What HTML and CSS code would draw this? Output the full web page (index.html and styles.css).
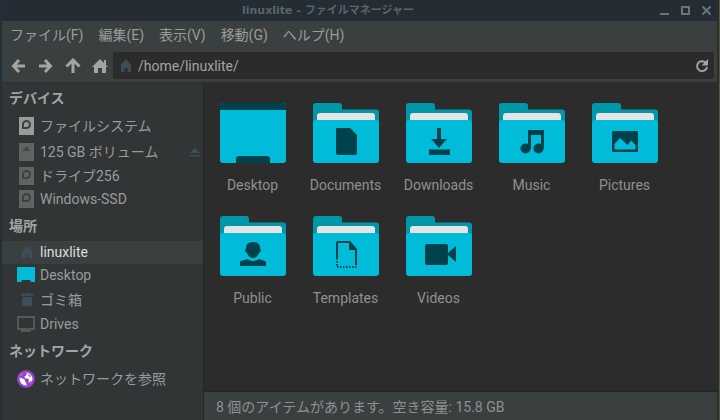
FILE: index.html
```html
<!DOCTYPE html>
<html lang="ja">
<head>
  <meta charset="UTF-8" />
  <meta name="viewport" content="width=device-width, initial-scale=1.0" />
  <title>linuxlite - ファイルマネージャー</title>
  <link rel="stylesheet" href="styles.css">
</head>
<body>
  <!-- shared shapes -->
  <svg class="defs" width="0" height="0" aria-hidden="true">
    <symbol id="folder" viewBox="0 0 66 60">
      <path fill="#0097a9" d="M0 3q0-3 3-3h23q3 0 3 3v3.500h34q3 0 3 3V30H0z" />
      <path fill="#e4e4e4" d="M4 13q0-3 3-3h52q3 0 3 3v10H4z" />
      <path fill="#00bcd8" d="M0 20q0-3 3-3h60q3 0 3 3v37q0 3-3 3H3q-3 0-3-3z" />
    </symbol>
    <symbol id="house" viewBox="0 0 16 16">
      <path d="M8 1L0 9h2v6h4v-5h4v5h4V9h2l-2-2V2h-2v3z" />
    </symbol>
    <symbol id="disk" viewBox="0 0 15 18">
      <path d="M0 0h15v18H0z" />
      <path class="mark" fill="none" stroke-width="2" d="M4 11V7.500A3.500 3.500 0 1 1 7.500 11z" />
    </symbol>
  </svg>

  <div class="window">
    <header class="titlebar">
      <h1 class="title">linuxlite - ファイルマネージャー</h1>
      <button class="win-btn" aria-label="最小化"><svg width="11" height="11"><path d="M1 9h9" /></svg></button>
      <button class="win-btn" aria-label="最大化"><svg width="11" height="11"><path d="M2 2h7v7H2z" /></svg></button>
      <button class="win-btn" aria-label="閉じる"><svg width="11" height="11"><path d="M1.500 1.500l8 8M9.500 1.500l-8 8" /></svg></button>
    </header>

    <nav class="menubar">
      <button>ファイル(F)</button>
      <button>編集(E)</button>
      <button>表示(V)</button>
      <button>移動(G)</button>
      <button>ヘルプ(H)</button>
    </nav>

    <div class="toolbar">
      <button class="tool" aria-label="戻る"><svg width="16" height="16"><path d="M14 8H3M8 2L2.500 8L8 14" /></svg></button>
      <button class="tool" aria-label="進む"><svg width="16" height="16"><path d="M1 8h11M7 2l5.500 6L7 14" /></svg></button>
      <button class="tool" aria-label="上へ"><svg width="16" height="16"><path d="M8 15V3M1.500 8.500L8 2l6.500 6.500" /></svg></button>
      <button class="tool home" aria-label="ホーム"><svg width="16" height="16"><use href="#house" /></svg></button>
      <div class="location">
        <svg class="location-icon" width="12" height="13"><path d="M6 0L0 7h1v6h3.500V9h3v4H11V7h1z" /></svg>
        <input type="text" value="/home/linuxlite/" aria-label="場所" />
        <button class="reload" aria-label="再読み込み">
          <svg width="14" height="14"><path class="arc" d="M10.500 3.500A5 5 0 1 0 12 8" /><path class="head" d="M13 0v6.500H6.500z" /></svg>
        </button>
      </div>
    </div>

    <div class="content">
      <aside class="sidebar">
        <h2>デバイス</h2>
        <a href="#" class="place tall"><svg class="disk bright" width="15" height="18"><use href="#disk" /></svg>ファイルシステム</a>
        <div class="volume">
          <a href="#" class="place tall"><svg class="disk" width="15" height="18"><path d="M0 0h15v18H0z" /><path class="eject-mark" d="M7.500 3l4 5h-8z" /></svg>125 GB ボリューム</a>
          <button class="eject" aria-label="取り出す"><svg width="10" height="9"><path d="M5 0l5 5H0zM0 7h10v1.500H0z" /></svg></button>
        </div>
        <a href="#" class="place"><svg class="disk" width="15" height="18"><use href="#disk" /></svg>ドライブ256</a>
        <a href="#" class="place"><svg class="disk" width="15" height="18"><use href="#disk" /></svg>Windows-SSD</a>

        <h2>場所</h2>
        <a href="#" class="place selected"><svg class="slate" width="12" height="12"><path d="M6 0L0 6.500h1V12h3.500V8.500h3V12H11V6.500h1z" /></svg>linuxlite</a>
        <a href="#" class="place"><svg width="18" height="15"><path fill="#00bcd8" d="M0 0h18v15h-4l-1-2H5l-1 2H0z" /></svg>Desktop</a>
        <a href="#" class="place tall"><svg class="slate" width="12" height="14"><path d="M0 1h4V0h4v1h4v2H0zM1 4h10v8q0 1-1 1H2q-1 0-1-1z" /></svg>ゴミ箱</a>
        <a href="#" class="place"><svg class="screen" width="18" height="16"><path d="M1 1h16v12H1zM4 15h10" /></svg>Drives</a>

        <h2>ネットワーク</h2>
        <a href="#" class="place tall">
          <svg width="18" height="18">
            <circle cx="9" cy="9" r="9" fill="#9440c4" />
            <circle cx="9" cy="9" r="6.500" fill="#fff" />
            <path fill="#9440c4" d="M7 2.500l3 0-.500 2.500-2 1.500.500 2h3l1 2-1 2 2-.500 1-2 .500 2-2 3-3 .500V13l-1.500-1.500V10L4 7.500 3 9l-.500-2zM11 4l2 1 1 2-2-.500z" />
          </svg>ネットワークを参照
        </a>
      </aside>

      <div class="pane">
        <main class="files">
          <a href="#" class="file">
            <svg viewBox="0 0 66 60">
              <rect width="66" height="60" rx="3" fill="#00bcd8" />
              <path fill="#00424c" d="M0 7V3q0-3 3-3h60q3 0 3 3v4zM16 60v-4q0-3 3-3h28q3 0 3 3v4z" />
            </svg>
            <span>Desktop</span>
          </a>
          <a href="#" class="file">
            <svg viewBox="0 0 66 60"><use href="#folder" />
              <path d="M23 26q0-1 1-1h13l7 7v18q0 2-2 2H25q-2 0-2-2z" />
            </svg>
            <span>Documents</span>
          </a>
          <a href="#" class="file">
            <svg viewBox="0 0 66 60"><use href="#folder" />
              <path d="M31 25h4v11h6l-8 9-8-9h6zM23 46.500h21V52H23z" />
            </svg>
            <span>Downloads</span>
          </a>
          <a href="#" class="file">
            <svg viewBox="0 0 66 60"><use href="#folder" />
              <path d="M29 27h16v19h-3V32H32v14h-3z" />
              <circle cx="26.500" cy="45.500" r="5" /><circle cx="39.500" cy="45.500" r="5" />
            </svg>
            <span>Music</span>
          </a>
          <a href="#" class="file">
            <svg viewBox="0 0 66 60"><use href="#folder" />
              <path fill-rule="evenodd" d="M21 28h24q1 0 1 1v19q0 1-1 1H21q-1 0-1-1V29q0-1 1-1zM22.500 46.500h21V42L39 37.500l-3.500 4.500L28 35l-5.500 6z" />
            </svg>
            <span>Pictures</span>
          </a>
          <a href="#" class="file">
            <svg viewBox="0 0 66 60"><use href="#folder" />
              <path d="M33 26q7 0 7 6l1 3-2 2q-2 5-6 5t-6-5l-2-2 1-3q0-6 7-6zM20 50v-4q0-1 1-1l6-2q6 4 12 0l6 2q1 0 1 1v4z" />
            </svg>
            <span>Public</span>
          </a>
          <a href="#" class="file">
            <svg viewBox="0 0 66 60"><use href="#folder" />
              <path d="M23 42V27q0-2 2-2h12l7 8v16h-2V34h-6v-7H25v15z" />
              <path class="dots" d="M24 42v9h20" />
            </svg>
            <span>Templates</span>
          </a>
          <a href="#" class="file">
            <svg viewBox="0 0 66 60"><use href="#folder" />
              <path d="M21 28h19q2 0 2 2v7l8-7v16l-8-7v8q0 2-2 2H21q-2 0-2-2V30q0-2 2-2z" />
            </svg>
            <span>Videos</span>
          </a>
        </main>
        <footer class="statusbar">8 個のアイテムがあります。空き容量: 15.8 GB</footer>
      </div>
    </div>
  </div>
</body>
</html>
```

FILE: styles.css
```css
* {
  box-sizing: border-box;
}

body {
  margin: 0;
  background-color: #232d33;
  color: #9a9b9b;
  font-family: Roboto, "Noto Sans CJK JP", sans-serif;
  font-size: 14px;
  line-height: 20px;
  border-right: 1px solid #6b5326;
}

svg {
  display: block;
}

.defs {
  position: absolute;
}

button {
  padding: 0;
  border: none;
  background: none;
  color: inherit;
  font: inherit;
}

a {
  color: inherit;
  text-decoration: none;
}

.window {
  display: flex;
  flex-direction: column;
  min-height: 100vh;
  border: solid #22303a;
  border-width: 0 2px;
}

/* title bar */
.titlebar {
  display: flex;
  align-items: center;
  height: 21px;
}

.title {
  flex: 1;
  margin: 0;
  color: #5a656b;
  font-family: "DejaVu Sans", "Noto Sans CJK JP", sans-serif;
  font-size: 11px;
  line-height: 20px;
  text-align: center;
}

.win-btn {
  display: grid;
  place-items: center;
  width: 21px;
  height: 21px;
}

.win-btn svg {
  fill: none;
  stroke: #6b7479;
  stroke-width: 2;
}

/* menu and toolbar */
.menubar {
  display: flex;
  gap: 15px;
  padding: 4px 8px 7px;
  height: 31px;
  background-color: #3a403f;
}

.toolbar {
  display: flex;
  padding: 0 3px 3px;
  background-color: #3a403f;
  border-bottom: 1px solid #2a2e2e;
}

.tool {
  display: grid;
  place-items: center;
  width: 27px;
  height: 27px;
}

.tool svg {
  fill: none;
  stroke: #a3a4a4;
  stroke-width: 3;
}

.home svg {
  fill: #a3a4a4;
  stroke: none;
}

.location {
  flex: 1;
  display: flex;
  align-items: center;
  gap: 6px;
  height: 27px;
  padding: 0 5px 0 7px;
  border-radius: 2px;
  background-color: #2b2b2b;
}

.location-icon {
  fill: #3d4e59;
}

.location input {
  flex: 1;
  min-width: 0;
  padding: 0;
  border: none;
  outline: none;
  background: none;
  color: #a3a4a4;
  font: inherit;
}

.arc {
  fill: none;
  stroke: #a3a4a4;
  stroke-width: 2;
}

.head {
  fill: #a3a4a4;
}

/* sidebar */
.content {
  flex: 1;
  display: flex;
}

.sidebar {
  width: 202px;
  background-color: #313536;
  border-right: 1px solid #272929;
}

.sidebar h2 {
  margin: 0;
  padding: 0 7px;
  font-size: 14px;
  line-height: 30px;
  color: #a3a4a4;
}

.place {
  flex: 1;
  display: flex;
  align-items: center;
  height: 23px;
  padding: 0 0 2px 15px;
}

.place.tall {
  height: 26px;
  padding-bottom: 0;
}

/* icons share one centre line */
.place svg {
  width: 18px;
  margin-right: 5px;
  overflow: visible;
}

.place .disk {
  width: 15px;
  margin-left: 2px;
  margin-right: 6px;
}

.place .slate {
  width: 12px;
  margin-left: 4px;
  margin-right: 7px;
}

.place.selected {
  background-color: #3a403f;
  color: #dcdddd;
}

.disk {
  fill: #616262;
  stroke: none;
}

.disk.bright {
  fill: #999a9a;
}

.mark {
  stroke: #3f4242;
}

.eject-mark {
  fill: #454747;
}

.slate {
  fill: #3d4e59;
}

.screen {
  fill: none;
  stroke: #646565;
  stroke-width: 1.5;
}

.volume {
  display: flex;
  align-items: center;
}

.eject {
  margin-right: 3px;
}

.eject svg {
  fill: #3f4f56;
}

/* files */
.pane {
  flex: 1;
  display: flex;
  flex-direction: column;
  min-width: 0;
  background-color: #2c2c2c;
}

.files {
  flex: 1;
  display: grid;
  grid-template-columns: repeat(auto-fill, 93px);
  grid-auto-rows: 113px;
  padding: 20px 2px 0;
}

.file {
  display: flex;
  flex-direction: column;
  align-items: center;
  gap: 12px;
  color: #8f9090;
}

.file svg {
  width: 66px;
  height: 60px;
  fill: #00424c;
}

.dots {
  fill: none;
  stroke: #00424c;
  stroke-width: 2;
  stroke-dasharray: 1.5;
}

.statusbar {
  padding: 5px 12px 3px;
  border-top: 1px solid #232525;
  background-color: #3a403f;
  color: #8f9090;
}
```
